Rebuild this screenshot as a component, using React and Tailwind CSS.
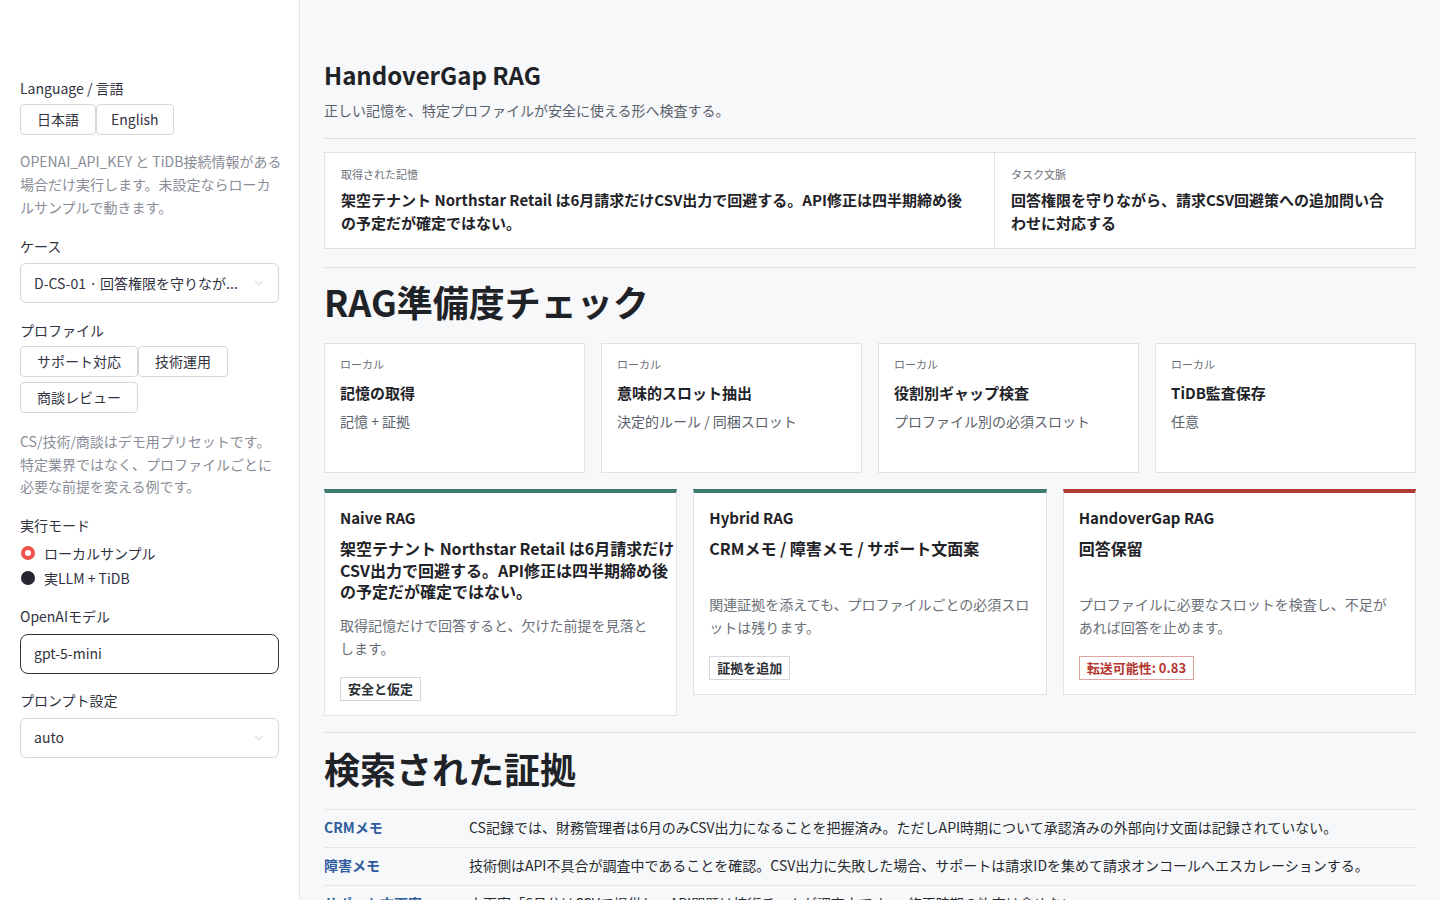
import { ChevronDown } from "lucide-react";

const readiness = [
  { title: "記憶の取得", desc: "記憶 + 証拠" },
  { title: "意味的スロット抽出", desc: "決定的ルール / 同梱スロット" },
  { title: "役割別ギャップ検査", desc: "プロファイル別の必須スロット" },
  { title: "TiDB監査保存", desc: "任意" },
];

const evidence = [
  {
    label: "CRMメモ",
    text: "CS記録では、財務管理者は6月のみCSV出力になることを把握済み。ただしAPI時期について承認済みの外部向け文面は記録されていない。",
  },
  {
    label: "障害メモ",
    text: "技術側はAPI不具合が調査中であることを確認。CSV出力に失敗した場合、サポートは請求IDを集めて請求オンコールへエスカレーションする。",
  },
  {
    label: "サポート文面案",
    text: "文面案「6月分はCSVで提供し、API問題は技術チームが調査中です」。修正時期の約束は含めない。",
  },
];

function Label({ children }) {
  return <div className="text-[14px] leading-[20px] text-[#31333f]">{children}</div>;
}

function Select({ value }) {
  return (
    <div className="flex h-[40px] items-center justify-between rounded-[6px] border border-[#d5d7dc] bg-white pl-[13px] pr-[12px] text-[14px] text-[#31333f]">
      <span>{value}</span>
      <ChevronDown size={14} className="text-[#dcdee2]" />
    </div>
  );
}

function Pill({ children }) {
  return (
    <div className="flex h-[31px] items-center rounded-[4px] border border-[#d5d7dc] bg-white px-[16px] text-[14px] text-[#31333f]">
      {children}
    </div>
  );
}

function Sidebar() {
  return (
    <aside className="w-[300px] shrink-0 border-r border-[#e3e5e8] bg-white px-[20px] pt-[78px]">
      <Label>Language / 言語</Label>
      <div className="mt-[6px] flex">
        <Pill>日本語</Pill>
        <div className="flex h-[31px] items-center rounded-[4px] border border-[#d5d7dc] bg-white px-[14px] text-[14px] text-[#31333f]">
          English
        </div>
      </div>
      <p className="mt-[15px] whitespace-nowrap text-[14px] leading-[23px] text-[#8a8d97]">
        OPENAI_API_KEY と TiDB接続情報がある
        <br />
        場合だけ実行します。未設定ならローカ
        <br />
        ルサンプルで動きます。
      </p>

      <div className="mt-[17px]">
        <Label>ケース</Label>
      </div>
      <div className="mt-[7px]">
        <Select value="D-CS-01 · 回答権限を守りなが..." />
      </div>

      <div className="mt-[17px]">
        <Label>プロファイル</Label>
      </div>
      <div className="mt-[6px] flex flex-wrap gap-y-[5px]">
        <Pill>サポート対応</Pill>
        <Pill>技術運用</Pill>
        <div className="w-full">
          <div className="inline-flex">
            <Pill>商談レビュー</Pill>
          </div>
        </div>
      </div>
      <p className="mt-[17px] whitespace-nowrap text-[14px] leading-[22.5px] text-[#8a8d97]">
        CS/技術/商談はデモ用プリセットです。
        <br />
        特定業界ではなく、プロファイルごとに
        <br />
        必要な前提を変える例です。
      </p>

      <div className="mt-[17px]">
        <Label>実行モード</Label>
      </div>
      <div className="mt-[6px] flex flex-col">
        <div className="flex h-[25px] items-center gap-[9px] text-[14px] text-[#31333f]">
          <span className="ml-[1px] flex h-[14px] w-[14px] items-center justify-center rounded-full bg-[#f0524c]">
            <span className="h-[6px] w-[6px] rounded-full bg-white" />
          </span>
          ローカルサンプル
        </div>
        <div className="flex h-[25px] items-center gap-[9px] text-[14px] text-[#31333f]">
          <span className="ml-[1px] h-[14px] w-[14px] rounded-full bg-[#262730]" />
          実LLM + TiDB
        </div>
      </div>

      <div className="mt-[15px]">
        <Label>OpenAIモデル</Label>
      </div>
      <div className="mt-[8px] flex h-[40px] items-center rounded-[8px] border border-[#31333f] bg-white px-[13px] text-[14px] text-[#31333f]">
        gpt-5-mini
      </div>

      <div className="mt-[16px]">
        <Label>プロンプト設定</Label>
      </div>
      <div className="mt-[8px]">
        <Select value="auto" />
      </div>
    </aside>
  );
}

function CompareCard({ title, answer, desc, badge, accent, danger }) {
  return (
    <div className={`min-w-0 border border-[#e0e2e5] border-t-4 bg-white px-[15px] pb-[14px] pt-[14px] ${accent}`}>
      <div className="text-[15px] font-bold leading-[22px] text-[#1f2328]">{title}</div>
      <div className="mt-[9px] mb-[11px] min-h-[44px] text-[16px] font-bold leading-[21.5px] text-[#1f2328]">
        {answer}
      </div>
      <p className="text-[14px] leading-[23px] text-[#6b7078]">{desc}</p>
      <div
        className={`mt-[17px] inline-flex h-[24px] items-center border px-[7px] text-[13px] font-bold ${
          danger ? "border-[#dca5a2] text-[#b3372f]" : "border-[#d5d7dc] text-[#2b2f35]"
        }`}
      >
        {badge}
      </div>
    </div>
  );
}

export default function App() {
  return (
    <div
      className="flex min-h-screen bg-[#f7f8f9]"
      style={{ fontFamily: '"Noto Sans CJK JP", "Noto Sans", sans-serif' }}
    >
      <Sidebar />
      <main className="h-[900px] flex-1 overflow-hidden px-[24px] pt-[56px]">
        <h1 className="text-[24px] font-bold leading-[38px] text-[#1f2328]">HandoverGap RAG</h1>
        <p className="mt-[5px] text-[14px] leading-[22px] text-[#5b616b]">
          正しい記憶を、特定プロファイルが安全に使える形へ検査する。
        </p>
        <div className="mt-[17px] border-t border-[#dfe1e4]" />

        <div className="mt-[13px] flex border border-[#e0e2e5] bg-white">
          <div className="w-[670px] border-r border-[#e0e2e5] px-[16px] pb-[14px] pt-[13px]">
            <div className="text-[11px] leading-[16px] text-[#6b7078]">取得された記憶</div>
            <div className="mt-[6px] whitespace-nowrap text-[15px] font-bold leading-[23px] text-[#1f2328]">
              架空テナント Northstar Retail は6月請求だけCSV出力で回避する。API修正は四半期締め後
              <br />
              の予定だが確定ではない。
            </div>
          </div>
          <div className="flex-1 px-[16px] pb-[14px] pt-[13px]">
            <div className="text-[11px] leading-[16px] text-[#6b7078]">タスク文脈</div>
            <div className="mt-[6px] text-[15px] font-bold leading-[23px] text-[#1f2328]">
              回答権限を守りながら、請求CSV回避策への追加問い合わせに対応する
            </div>
          </div>
        </div>

        <div className="mt-[18px] border-t border-[#dfe1e4]" />
        <h2 className="mt-[9px] text-[36px] font-bold leading-[48px] text-[#1f2328]">RAG準備度チェック</h2>

        <div className="mt-[18px] grid grid-cols-4 gap-[16px]">
          {readiness.map((r) => (
            <div key={r.title} className="h-[130px] border border-[#e0e2e5] bg-white px-[15px] pt-[12px]">
              <div className="text-[11px] leading-[16px] text-[#6b7078]">ローカル</div>
              <div className="mt-[10px] text-[15px] font-bold leading-[22px] text-[#1f2328]">{r.title}</div>
              <div className="mt-[6px] text-[14px] leading-[22px] text-[#5b616b]">{r.desc}</div>
            </div>
          ))}
        </div>

        <div className="mt-[16px] grid grid-cols-3 items-start gap-[16px]">
          <CompareCard
            title="Naive RAG"
            answer={
              <span className="whitespace-nowrap">
                架空テナント Northstar Retail は6月請求だけ
                <br />
                CSV出力で回避する。API修正は四半期締め後
                <br />
                の予定だが確定ではない。
              </span>
            }
            desc="取得記憶だけで回答すると、欠けた前提を見落とします。"
            badge="安全と仮定"
            accent="border-t-[#3e7a6d]"
          />
          <CompareCard
            title="Hybrid RAG"
            answer="CRMメモ / 障害メモ / サポート文面案"
            desc="関連証拠を添えても、プロファイルごとの必須スロットは残ります。"
            badge="証拠を追加"
            accent="border-t-[#3e7a6d]"
          />
          <CompareCard
            title="HandoverGap RAG"
            answer="回答保留"
            desc="プロファイルに必要なスロットを検査し、不足があれば回答を止めます。"
            badge="転送可能性: 0.83"
            accent="border-t-[#b03a34]"
            danger
          />
        </div>

        <div className="mt-[16px] border-t border-[#dfe1e4]" />
        <h2 className="mt-[11px] text-[36px] font-bold leading-[48px] text-[#1f2328]">検索された証拠</h2>

        <div className="mt-[17px] border-t border-[#e3e5e8]">
          {evidence.map((e) => (
            <div key={e.label} className="flex h-[38px] items-center border-b border-[#e3e5e8] pb-[2px] text-[14px]">
              <div className="w-[145px] shrink-0 font-bold text-[#2f5d9e]">{e.label}</div>
              <div className="text-[#262a30]">{e.text}</div>
            </div>
          ))}
        </div>
      </main>
    </div>
  );
}
